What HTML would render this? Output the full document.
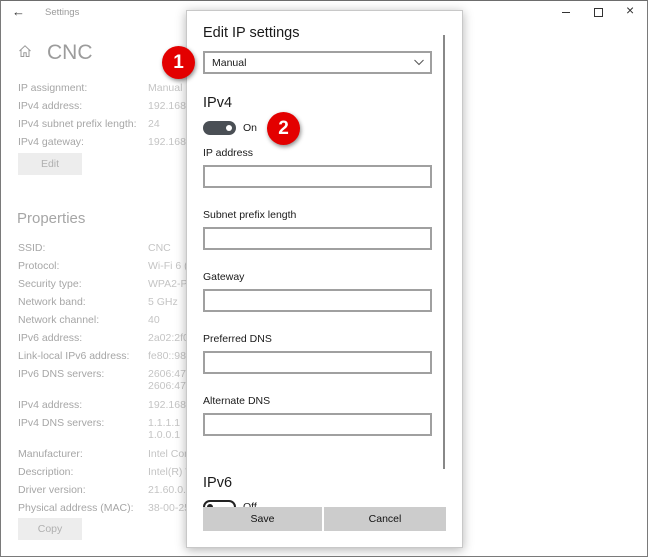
<!DOCTYPE html><html><head><style>
*{margin:0;padding:0;box-sizing:border-box}
body{width:648px;height:557px;background:#fff;font-family:"Liberation Sans",sans-serif;position:relative;overflow:hidden}
.win{position:absolute;left:0;top:0;width:648px;height:557px;border:1px solid #7a7a7a;border-top-color:#6d6d6d}
.a{position:absolute;white-space:nowrap}
.l{font-size:10.5px;color:#a6a6a6;left:18px}
.v{font-size:10.5px;color:#c4c4c4;left:148px}
.dlg{position:absolute;left:186px;top:10px;width:277px;height:538px;background:#fff;border:1px solid #c8c8c8;box-shadow:0 2px 10px rgba(0,0,0,.3);overflow:hidden}
.d{position:absolute;white-space:nowrap;color:#1a1a1a}
.lab{font-size:10.5px}
.inp{position:absolute;left:16px;width:229px;height:23px;border:2px solid #a0a0a0;background:#fff}
.btn{position:absolute;top:496px;height:24px;background:#ccc;font-size:10.5px;text-align:center;line-height:24px;color:#111}
.badge{position:absolute;width:33px;height:33px;border-radius:50%;background:#e30000;color:#fff;font-weight:bold;font-size:19px;text-align:center;line-height:33px;box-shadow:1px 2px 4px rgba(0,0,0,.45)}
</style></head><body>
<div class="win"></div>
<div class="a" style="left:12px;top:4px;font-size:13px;color:#333">&#8592;</div>
<div class="a" style="left:45px;top:7px;font-size:9.5px;color:#9a9a9a">Settings</div>
<svg class="a" style="left:18px;top:44px" width="14" height="14" viewBox="0 0 14 14"><path d="M1.5 7 L7 1.8 L12.5 7 M3 5.6 V12.5 H5.8 V8.8 H8.2 V12.5 H11 V5.6" fill="none" stroke="#999" stroke-width="1"/></svg>
<div class="a" style="left:47px;top:41px;font-size:21px;color:#9c9c9c">CNC</div>
<div class="a" style="left:562px;top:12px;width:8px;height:1px;background:#333"></div>
<div class="a" style="left:594px;top:8px;width:9px;height:9px;border:1px solid #333"></div>
<div class="a" style="left:626px;top:2px;font-size:14px;color:#333">&#215;</div>
<div class="a l" style="top:82px">IP assignment:</div><div class="a v" style="top:82px">Manual</div>
<div class="a l" style="top:100px">IPv4 address:</div><div class="a v" style="top:100px">192.168.5</div>
<div class="a l" style="top:118px">IPv4 subnet prefix length:</div><div class="a v" style="top:118px">24</div>
<div class="a l" style="top:136px">IPv4 gateway:</div><div class="a v" style="top:136px">192.168.5</div>
<div class="a" style="left:18px;top:153px;width:64px;height:22px;background:#ededed;color:#b0b0b0;font-size:10.5px;text-align:center;line-height:22px">Edit</div>
<div class="a" style="left:17px;top:210px;font-size:15px;color:#a6a6a6">Properties</div>
<div class="a l" style="top:242px">SSID:</div><div class="a v" style="top:242px">CNC</div>
<div class="a l" style="top:260px">Protocol:</div><div class="a v" style="top:260px">Wi-Fi 6 (</div>
<div class="a l" style="top:278px">Security type:</div><div class="a v" style="top:278px">WPA2-Pe</div>
<div class="a l" style="top:296px">Network band:</div><div class="a v" style="top:296px">5 GHz</div>
<div class="a l" style="top:314px">Network channel:</div><div class="a v" style="top:314px">40</div>
<div class="a l" style="top:332px">IPv6 address:</div><div class="a v" style="top:332px">2a02:2f0</div>
<div class="a l" style="top:350px">Link-local IPv6 address:</div><div class="a v" style="top:350px">fe80::981</div>
<div class="a l" style="top:368px">IPv6 DNS servers:</div><div class="a v" style="top:368px">2606:470</div><div class="a v" style="top:380px">2606:470</div>
<div class="a l" style="top:399px">IPv4 address:</div><div class="a v" style="top:399px">192.168.5</div>
<div class="a l" style="top:417px">IPv4 DNS servers:</div><div class="a v" style="top:417px">1.1.1.1</div><div class="a v" style="top:429px">1.0.0.1</div>
<div class="a l" style="top:448px">Manufacturer:</div><div class="a v" style="top:448px">Intel Cor</div>
<div class="a l" style="top:466px">Description:</div><div class="a v" style="top:466px">Intel(R) W</div>
<div class="a l" style="top:484px">Driver version:</div><div class="a v" style="top:484px">21.60.0.5</div>
<div class="a l" style="top:502px">Physical address (MAC):</div><div class="a v" style="top:502px">38-00-25</div>
<div class="a" style="left:18px;top:518px;width:64px;height:22px;background:#ededed;color:#b0b0b0;font-size:10.5px;text-align:center;line-height:22px">Copy</div>

<div class="dlg">
<div class="d" style="left:16px;top:14px;font-size:14.5px">Edit IP settings</div>
<div class="inp" style="top:40px;height:23px;"><span class="d lab" style="left:7px;top:4px">Manual</span>
<svg class="d" style="left:209px;top:6px" width="10" height="7"><path d="M0.5 1 L5 5.5 L9.5 1" fill="none" stroke="#555"/></svg></div>
<div class="d" style="left:16px;top:84px;font-size:14.5px">IPv4</div>
<div class="d" style="left:16px;top:110px;width:33px;height:14px;border-radius:7px;background:#4a4f55"></div>
<div class="d" style="left:39px;top:114px;width:6px;height:6px;border-radius:50%;background:#fff"></div>
<div class="d lab" style="left:56px;top:111px">On</div>
<div class="d lab" style="left:16px;top:136px">IP address</div><div class="inp" style="top:154px"></div>
<div class="d lab" style="left:16px;top:198px">Subnet prefix length</div><div class="inp" style="top:216px"></div>
<div class="d lab" style="left:16px;top:260px">Gateway</div><div class="inp" style="top:278px"></div>
<div class="d lab" style="left:16px;top:322px">Preferred DNS</div><div class="inp" style="top:340px"></div>
<div class="d lab" style="left:16px;top:384px">Alternate DNS</div><div class="inp" style="top:402px"></div>
<div class="d" style="left:16px;top:464px;font-size:14.5px">IPv6</div>
<div class="d" style="left:16px;top:489px;width:33px;height:14px;border-radius:7px;border:2px solid #222"></div>
<div class="d" style="left:20px;top:493px;width:6px;height:6px;border-radius:50%;background:#222"></div>
<div class="d lab" style="left:56px;top:490px">Off</div>
<div class="d" style="left:256px;top:24px;width:2px;height:434px;background:#888"></div>
<div class="btn" style="left:16px;width:119px">Save</div>
<div class="btn" style="left:137px;width:122px">Cancel</div>
</div>
<div class="badge" style="left:162px;top:46px">1</div>
<div class="badge" style="left:267px;top:112px">2</div>
</body></html>
